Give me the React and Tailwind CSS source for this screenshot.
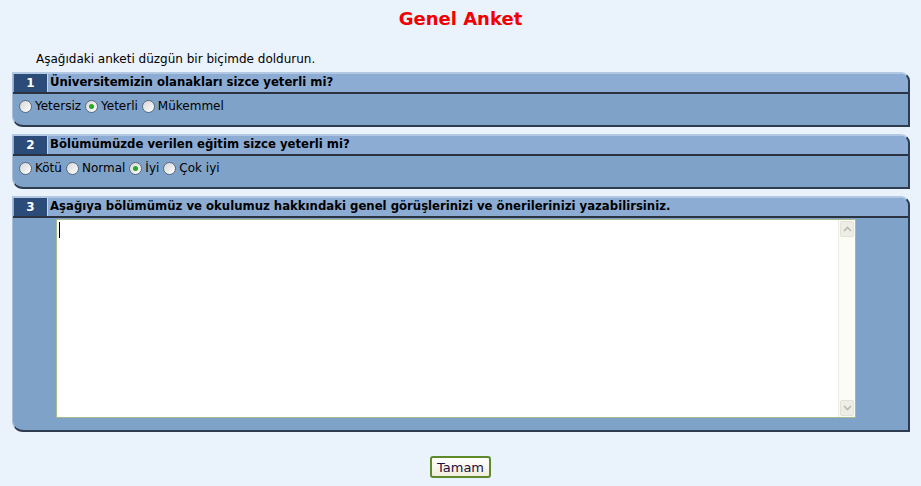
import { useState } from "react";

function Radio({ checked, label, onClick }) {
  return (
    <label className="flex items-center gap-[3px] cursor-default" onClick={onClick}>
      <span className="w-[13px] h-[13px] rounded-full border border-[#5a6b80] bg-gradient-to-br from-[#d6d6d6] to-white flex items-center justify-center">
        {checked && <span className="w-[5px] h-[5px] rounded-full bg-[#27a827]" />}
      </span>
      <span>{label}</span>
    </label>
  );
}

function Panel({ num, title, children }) {
  return (
    <div className="ml-[12px] mr-[11px] rounded-tr-[9px] rounded-bl-[11px] bg-[#7fa2c9] border-t-[2px] border-l border-t-[#b3c8e3] border-l-[#a9bfdc] border-r-2 border-b-2 border-r-[#2e3c52] border-b-[#2e3c52] overflow-hidden">
      <div className="flex h-[20px] border-b-2 border-[#2c3340] bg-[#8cacd4] rounded-tr-[8px]">
        <div className="w-[33px] ml-[1px] bg-[#2b4b79] text-white font-bold text-[12px] flex items-center justify-center leading-none">
          {num}
        </div>
        <div className="pl-[2px] font-bold text-[11.7px] text-black flex items-center leading-none border-l border-[#c5d5ea]">
          {title}
        </div>
      </div>
      {children}
    </div>
  );
}

export default function App() {
  const [q1, setQ1] = useState(1);
  const [q2, setQ2] = useState(2);
  const opts1 = ["Yetersiz", "Yeterli", "Mükemmel"];
  const opts2 = ["Kötü", "Normal", "İyi", "Çok iyi"];

  return (
    <div className="w-[921px] h-[486px] bg-[#eaf2fc] text-[12px] text-black overflow-hidden" style={{ fontFamily: "'DejaVu Sans', Verdana, sans-serif" }}>
      <div className="h-[35px] flex items-center justify-center pt-[1px]">
        <h1 className="text-[#f20000] font-bold text-[18px]">Genel Anket</h1>
      </div>
      <p className="pl-[36px] pt-[16px] h-[37px] leading-[16px]">Aşağıdaki anketi düzgün bir biçimde doldurun.</p>

      <Panel num="1" title="Üniversitemizin olanakları sizce yeterli mi?">
        <div className="h-[31px] flex items-start pt-[3px] pl-[6px] gap-[4px]">
          {opts1.map((o, i) => (
            <Radio key={o} label={o} checked={q1 === i} onClick={() => setQ1(i)} />
          ))}
        </div>
      </Panel>

      <div className="h-[7px]" />

      <Panel num="2" title="Bölümümüzde verilen eğitim sizce yeterli mi?">
        <div className="h-[31px] flex items-start pt-[3px] pl-[6px] gap-[4px]">
          {opts2.map((o, i) => (
            <Radio key={o} label={o} checked={q2 === i} onClick={() => setQ2(i)} />
          ))}
        </div>
      </Panel>

      <div className="h-[7px]" />

      <Panel num="3" title="Aşağıya bölümümüz ve okulumuz hakkındaki genel görüşlerinizi ve önerilerinizi yazabilirsiniz.">
        <div className="pl-[43px] pt-[1px] pb-[12px]">
          <div className="w-[800px] h-[199px] border border-[#a6ba8a] bg-white flex">
            <div className="flex-1 pl-[2px] pt-[2px]">
              <div className="w-[1px] h-[16px] bg-black" />
            </div>
            <div className="w-[17px] bg-[#fcfcf7] border-l border-[#ecece4] flex flex-col justify-between">
              <div className="h-[16px] m-[1px] rounded-[2px] bg-[#eeeee6] border border-[#e2e2d8] flex items-center justify-center">
                <svg width="9" height="6" viewBox="0 0 9 6"><path d="M1 5 L4.5 1.5 L8 5" stroke="#b9b9b0" strokeWidth="1.6" fill="none" /></svg>
              </div>
              <div className="h-[16px] m-[1px] rounded-[2px] bg-[#eeeee6] border border-[#e2e2d8] flex items-center justify-center">
                <svg width="9" height="6" viewBox="0 0 9 6"><path d="M1 1 L4.5 4.5 L8 1" stroke="#b9b9b0" strokeWidth="1.6" fill="none" /></svg>
              </div>
            </div>
          </div>
        </div>
      </Panel>

      <div className="flex justify-center pt-[24px]">
        <button className="w-[61px] h-[22px] rounded-[3px] border-2 border-[#5e8a2c] bg-gradient-to-b from-white to-[#f1eedd] text-[13px] text-[#1a1040] leading-none" style={{ fontFamily: "Tahoma, 'DejaVu Sans', sans-serif" }}>
          Tamam
        </button>
      </div>
    </div>
  );
}
